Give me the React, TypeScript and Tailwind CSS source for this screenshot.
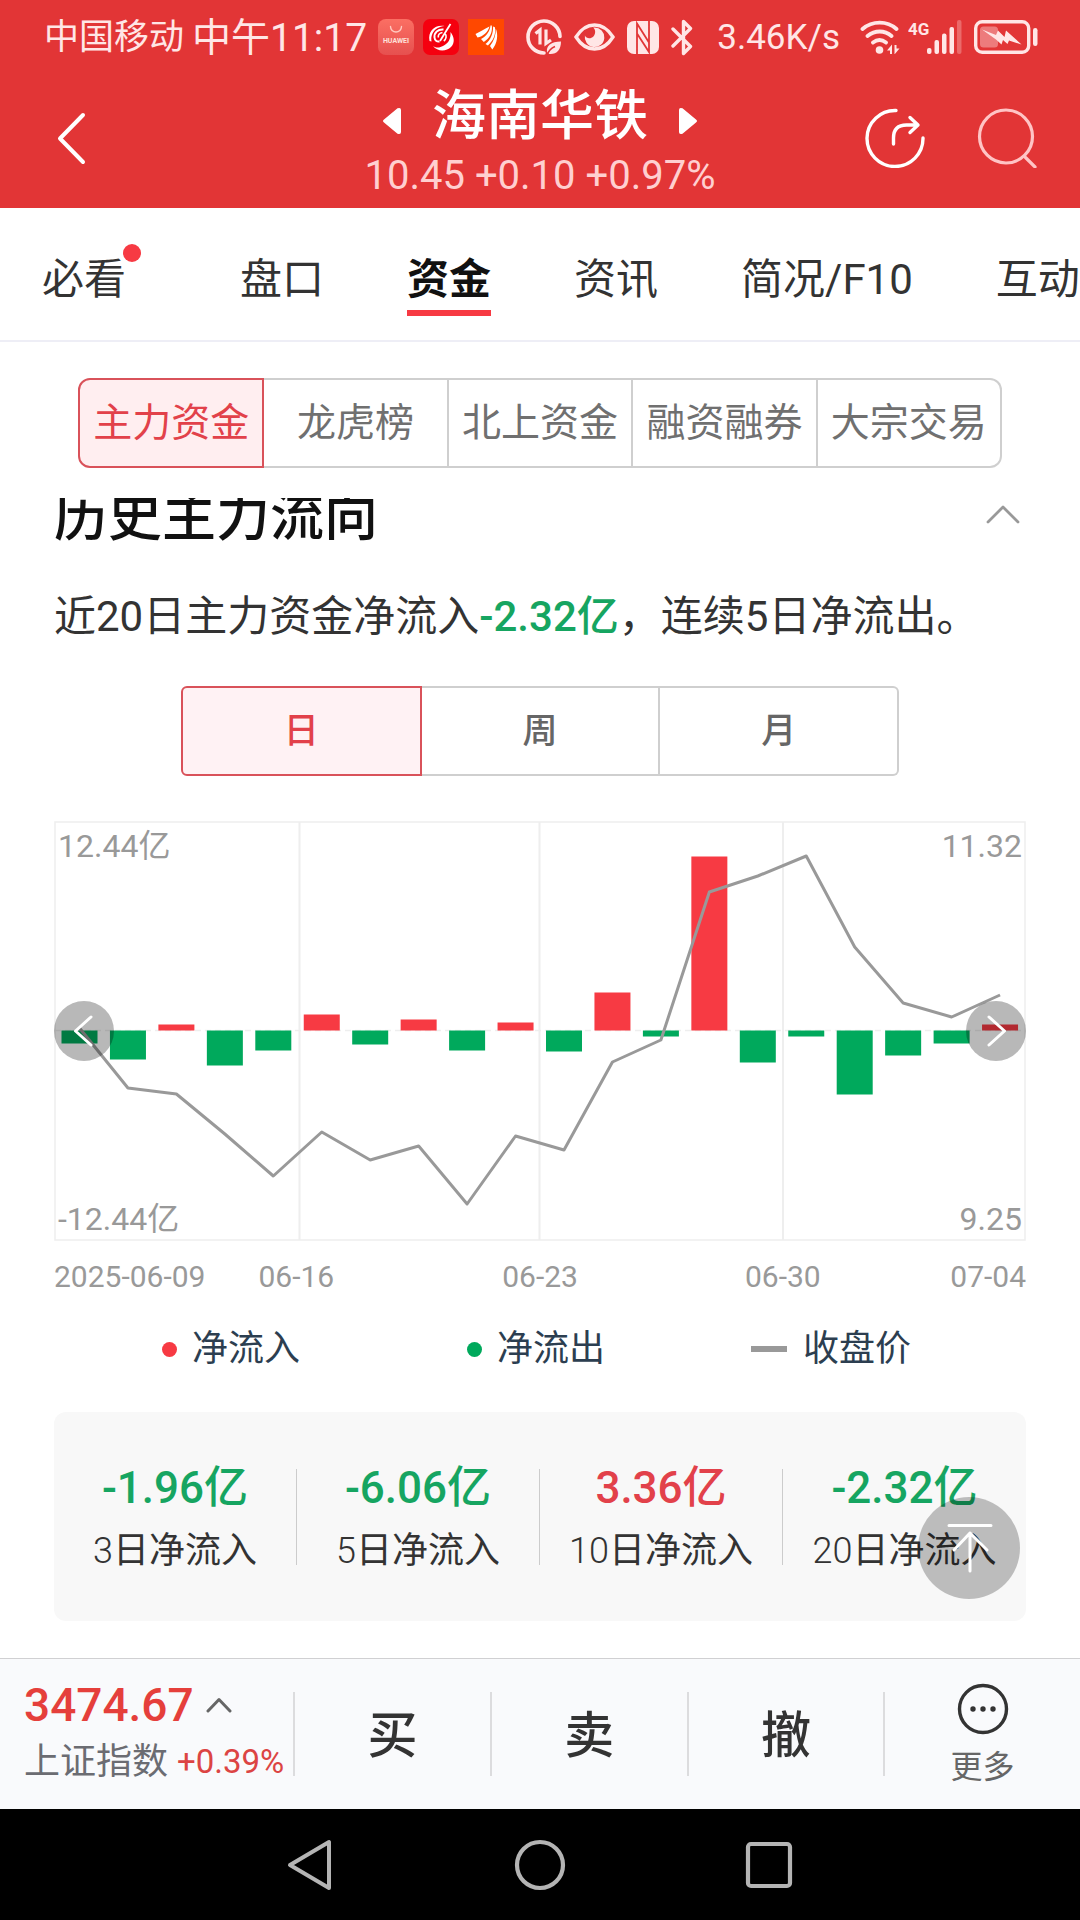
import React from 'react';

const TABS = ['盘口', '资金', '资讯', '简况/F10', '互动'];
const SECTIONS = ['主力资金', '龙虎榜', '北上资金', '融资融券', '大宗交易'];
const PERIODS = ['日', '周', '月'];

const FLOWS = [-13, -29, 6, -35, -20, 16, -14, 11, -20, 8, -21, 38, -6, 174, -32, -6, -64, -25, -13, 6];
const PRICES = [207, 267, 273, 313, 355, 311, 339, 325, 383, 315, 329, 241, 219, 71, 55, 35, 126, 182, 196, 174];

const SUMMARY = [
  { value: '-1.96亿', days: '3', up: false },
  { value: '-6.06亿', days: '5', up: false },
  { value: '3.36亿', days: '10', up: true },
  { value: '-2.32亿', days: '20', up: false },
];

function StatusBar() {
  return (
    <div className="flex h-[74px] items-center whitespace-nowrap pl-[44px] pr-[42px] text-[#ffe6e6]">
      <span className="pt-[2px] text-[35px] leading-[40px]">中国移动</span>
      <span className="ml-2 pt-[2px] text-[39px] leading-[40px]">中午11:17</span>
      <svg className="ml-auto h-9 w-9 shrink-0" viewBox="0 0 36 36" role="img" aria-label="应用市场">
        <defs>
          <linearGradient id="market" x1="0" y1="0" x2="0" y2="1">
            <stop offset="0" stopColor="#fb6f63" />
            <stop offset="1" stopColor="#e6504f" />
          </linearGradient>
        </defs>
        <rect width="36" height="36" rx="8" fill="url(#market)" />
        <path d="M12.500 7.500a5.500 5.500 0 0 0 11 0" fill="none" stroke="#ffc9c0" strokeWidth="1.400" strokeLinecap="round" />
        <text x="18" y="24" textAnchor="middle" fontFamily="Roboto, sans-serif" fontSize="7" fontWeight="700" fill="#ffe0da">HUAWEI</text>
      </svg>
      <svg className="ml-[9px] h-9 w-9 shrink-0" viewBox="0 0 36 36" aria-hidden="true">
        <rect width="36" height="36" rx="7" fill="#f5000f" />
        <path d="M6.500 22C4.500 12 12 5.500 21.500 7c-5 .5-10 3-12 7.500-1.200 2.500-1.500 5-1 8z" fill="#fff" />
        <path d="M10 27c4 2.500 7 1.500 10 0C25 24.500 28 20.500 27.500 13c4 5 4.500 11 .5 15-4.500 4.500-13.500 5-18-1z" fill="#fff" />
        <path d="M27.500 5 17 22" stroke="#fff" strokeWidth="1.800" fill="none" />
        <path d="M20.500 10.500c-5.500-.5-9.500 3-9 8 .3 3 2.300 4.500 5 4" stroke="#fff" strokeWidth="2" fill="none" />
        <path d="M19.500 13.500c-3 .5-4.500 2.500-4.200 5M22 15c1.800 1 1.500 5-1.200 7" stroke="#fff" strokeWidth="1.600" fill="none" />
      </svg>
      <svg className="ml-[9px] h-9 w-9 shrink-0" viewBox="0 0 36 36" aria-hidden="true">
        <rect width="36" height="36" fill="#ff4800" />
        <path d="M7.500 15C12 13 16 10 21.500 7.500 20 13 15 17.500 9.500 18.500z" fill="#fff" />
        <path d="M13 20C18 17.500 22 12.500 22.500 6.500h1.300c1 7.500-2.500 13-8 16.500z" fill="#fff" />
        <path d="M17.500 25c5-4 7.800-10 7.600-17.500l1.800.8c1.200 7-1.600 13.500-7 18.200z" fill="#fff" />
        <path d="M22 27c4-5 6-11 5.800-17.500 2.600 6.500 1.600 14.500-3.500 21z" fill="#fff" />
      </svg>
      <svg className="ml-[22px] h-9 w-9 shrink-0" viewBox="0 0 36 36" fill="none" stroke="currentColor" aria-hidden="true">
        <path d="M18 34A16 16 0 1 1 34 17.500" strokeWidth="3.600" strokeLinecap="round" />
        <path d="M9.500 14.500 14 11v14.500M20 10.500V24.500l5-3.500" strokeWidth="3.200" />
        <path d="M21 33c-1-6 4-10.500 14-10.500 0 8-4 12.500-10.500 12.500-1.500 0-2.500-.5-3.500-2z" fill="currentColor" stroke="none" />
        <path d="M21 36c1.500-4 4.500-7 8-8.500" stroke="#e23536" strokeWidth="1.600" />
      </svg>
      <svg className="ml-[12px] h-[28px] w-[41px] shrink-0" viewBox="0 0 41 28" aria-hidden="true">
        <path d="M2 14C7 6 13.500 2 20.500 2S34 6 39 14c-5 8-11.500 12-18.500 12S7 22 2 14z" fill="none" stroke="currentColor" strokeWidth="3.400" />
        <path d="M20.500 4.500a9.800 9.800 0 1 1-9.600 8c1.500 3.500 6 3.500 8.500 1 2.300-2.500 2.500-6.500-.2-8.900z" fill="currentColor" />
      </svg>
      <svg className="ml-[12px] h-[33px] w-8 shrink-0" viewBox="0 0 32 33" aria-hidden="true">
        <rect width="32" height="33" rx="7" fill="currentColor" />
        <path d="M10 33V2.500L22 21.500M22 0v31L10 12.500" fill="none" stroke="#e23536" strokeWidth="1.800" />
      </svg>
      <svg className="ml-[12px] h-[37px] w-[22px] shrink-0" viewBox="0 0 22 37" fill="none" stroke="currentColor" strokeWidth="3.400" strokeLinejoin="round" strokeLinecap="round" aria-hidden="true">
        <path d="M2 10l17.500 17.500-7 7V2.500l7 7L2 27" />
      </svg>
      <span className="ml-[24px] pt-[2px] text-[35px] leading-[40px]">3.46K/s</span>
      <svg className="ml-[20px] h-[34px] w-[40px] shrink-0" viewBox="0 0 40 34" fill="none" stroke="currentColor" strokeWidth="3.800" strokeLinecap="round" aria-hidden="true">
        <path d="M2.500 9c10-8.500 24.500-8.500 34 0M7.500 16c7.500-6 17-6 24 0M13 22.500c4.500-3.500 8.500-3.500 13 0" />
        <circle cx="19.500" cy="30" r="3.800" fill="currentColor" stroke="none" />
        <path d="M27 30.500l5-6v9.500h-2v-3.500zM39.500 28.500l-5 6v-9.500h2v3.500z" fill="currentColor" stroke="none" />
      </svg>
      <svg className="ml-[8px] h-[34px] w-[54px] shrink-0" viewBox="0 0 54 34" fill="currentColor" role="img" aria-label="4G">
        <text x="0" y="15" fontFamily="Roboto, sans-serif" fontSize="17" fontWeight="700">4G</text>
        <rect x="19" y="28" width="4.500" height="6" rx="2" />
        <rect x="26.500" y="20" width="4.500" height="14" rx="2" />
        <rect x="34" y="13.500" width="4.500" height="20.500" rx="2" />
        <rect x="41.500" y="7" width="4.500" height="27" rx="2" />
        <rect x="49" y="0" width="4.500" height="34" rx="2" opacity="0.300" />
      </svg>
      <svg className="ml-[12px] h-[34px] w-[64px] shrink-0" viewBox="0 0 64 34" aria-hidden="true">
        <rect x="1.700" y="1.700" width="53" height="30.600" rx="6.500" fill="none" stroke="currentColor" strokeWidth="3.400" />
        <rect x="6" y="6.500" width="18" height="21" rx="3.500" fill="currentColor" opacity="0.400" />
        <rect x="59" y="8" width="4.500" height="18" rx="2.200" fill="currentColor" />
        <path d="M8 9.500l14 5.500 2-4.500 6.500 6.500 1.500-6.500L47.500 24.500 35 20.500l-1.500 3.500-4.500-4-1.500 4.500-5.500-5z" fill="currentColor" />
      </svg>
    </div>
  );
}

function Header() {
  return (
    <header className="h-[208px] bg-[#e23536] text-white">
      <StatusBar />
      <div className="flex h-[128px] items-center justify-between pl-[52px] pr-[43px]">
        <button type="button" aria-label="返回" className="w-[163px]">
          <svg className="h-[60px] w-[40px]" viewBox="0 0 40 60" fill="none" stroke="currentColor" strokeWidth="4" strokeLinecap="round" strokeLinejoin="round">
            <path d="M31 7 8 30.500 31 54" />
          </svg>
        </button>
        <div className="flex flex-col items-center whitespace-nowrap pt-3">
          <div className="flex items-center gap-[31px]">
            <button type="button" aria-label="上一只" className="pt-2">
              <svg className="h-[28px] w-[18px]" viewBox="0 0 18 28" fill="currentColor"><path d="M1 12.500 14.500 1.300Q18 0 18 3v22q0 3-3.500 1.700L1 15.500q-2-1.500 0-3z" /></svg>
            </button>
            <h1 className="text-[54px] font-medium leading-[64px]">海南华铁</h1>
            <button type="button" aria-label="下一只" className="pt-2">
              <svg className="h-[28px] w-[18px]" viewBox="0 0 18 28" fill="currentColor"><path d="M17 12.500 3.500 1.300Q0 0 0 3v22q0 3 3.500 1.700L17 15.500q2-1.500 0-3z" /></svg>
            </button>
          </div>
          <p className="text-[40px] leading-[54px] text-[#ffcfd0]">10.45 +0.10 +0.97%</p>
        </div>
        <div className="flex items-center gap-[52px]">
          <button type="button" aria-label="分享">
            <svg className="h-[60px] w-[60px]" viewBox="0 0 60 60" fill="none" stroke="currentColor" strokeWidth="3.400" strokeLinecap="round" strokeLinejoin="round">
              <path d="M31 2.500A28 28 0 1 0 58 30" />
              <path d="M28.500 36V30q0-13 13-13H52M45 9.500l8 7.500-8 7.500" />
            </svg>
          </button>
          <button type="button" aria-label="搜索">
            <svg className="h-[60px] w-[60px]" viewBox="0 0 60 60" fill="none" stroke="#ffc4c5" strokeWidth="3.200" strokeLinecap="round">
              <circle cx="29" cy="28.500" r="26.500" />
              <path d="M48.500 49.500 58 59" />
            </svg>
          </button>
        </div>
      </div>
    </header>
  );
}

function Tabs() {
  return (
    <nav className="flex h-[134px] gap-[83px] overflow-hidden whitespace-nowrap border-b-2 border-[#eeeef6] pl-[42px] text-[42px] leading-[60px] text-[#333]">
      <button type="button" className="relative mr-[31px] mt-[42px] h-[60px] shrink-0">
        必看
        <span className="absolute -right-[15px] -top-[6px] h-[18px] w-[18px] rounded-full bg-[#f73a43]" />
      </button>
      {TABS.map((tab) =>
        tab === '资金' ? (
          <button key={tab} type="button" className="mt-[42px] h-[66px] shrink-0 border-b-[6px] border-[#f73a43] font-bold text-[#111]">
            {tab}
          </button>
        ) : (
          <button key={tab} type="button" className="mt-[42px] h-[60px] shrink-0">
            {tab}
          </button>
        ),
      )}
    </nav>
  );
}

function FlowChart() {
  const x = (i: number) => 25.5 + i * 48.45;
  const line = PRICES.map((p, i) => `${x(i)},${p}`).join(' ');
  return (
    <div className="relative mt-[45px] text-[32px] leading-[36px] text-[#999]">
      <svg className="block h-auto w-full" viewBox="0 0 972 420" role="img" aria-label="主力资金流向图">
        <g fill="none" stroke="#eeeeee" strokeWidth="1.500">
          <rect x="1" y="1" width="970" height="418" />
          <path d="M245.500 1v418M485.500 1v418M729 1v418" strokeWidth="2" />
          <path d="M1 209.500h970" strokeDasharray="6 4" />
        </g>
        {FLOWS.map((v, i) => (
          <rect key={i} x={x(i) - 18} y={v > 0 ? 209.5 - v : 209.5} width={36} height={Math.abs(v)} fill={v > 0 ? '#f73a43' : '#00a95c'} />
        ))}
        <polyline points={line} fill="none" stroke="#999" strokeWidth="3" strokeLinejoin="round" />
      </svg>
      <span className="absolute left-[4px] top-[7px]">12.44亿</span>
      <span className="absolute right-[4px] top-[7px]">11.32</span>
      <span className="absolute bottom-[4px] left-[4px]">-12.44亿</span>
      <span className="absolute bottom-[4px] right-[4px]">9.25</span>
      <button type="button" aria-label="向前" className="absolute left-0 top-1/2 -mt-[30px] h-[60px] w-[60px] rounded-full bg-black/28">
        <svg viewBox="0 0 60 60" fill="none" stroke="#fff" strokeWidth="3" strokeLinecap="round" strokeLinejoin="round"><path d="M37 16 21.500 30 37 44" /></svg>
      </button>
      <button type="button" aria-label="向后" className="absolute right-0 top-1/2 -mt-[30px] h-[60px] w-[60px] rounded-full bg-black/28">
        <svg viewBox="0 0 60 60" fill="none" stroke="#fff" strokeWidth="3" strokeLinecap="round" strokeLinejoin="round"><path d="M23 16 38.500 30 23 44" /></svg>
      </button>
    </div>
  );
}

function BottomBar() {
  return (
    <footer className="flex h-[151px] items-center border-t border-[#d0d0d2] bg-[#f9fafc] text-[#333]">
      <button type="button" className="w-[293px] shrink-0 whitespace-nowrap pl-6 text-left">
        <span className="flex items-center gap-[12px] text-[46px] font-medium leading-[56px] text-[#e53f3b]">
          3474.67
          <svg className="h-[16px] w-[26px]" viewBox="0 0 26 16" fill="none" stroke="#666" strokeWidth="3" strokeLinecap="round" strokeLinejoin="round"><path d="M2 14 13 2.500 24 14" /></svg>
        </span>
        <span className="flex items-center gap-[9px] text-[36px] leading-[58px] text-[#6b6c72]">
          上证指数
          <span className="text-[33px] text-[#dc4443]">+0.39%</span>
        </span>
      </button>
      {['买', '卖', '撤'].map((label) => (
        <button key={label} type="button" className="h-[84px] flex-1 border-l-2 border-[#dcdcde] pt-1 text-[50px] font-medium leading-[80px]">
          {label}
        </button>
      ))}
      <div className="h-[84px] w-[2px] bg-[#dcdcde]" />
      <button type="button" className="flex flex-1 flex-col items-center pt-1 text-[32px] leading-[44px] text-[#666]">
        <svg className="mb-[10px] h-[52px] w-[52px]" viewBox="0 0 52 52" aria-hidden="true">
          <circle cx="26" cy="26" r="23.500" fill="none" stroke="#333" strokeWidth="3.400" />
          <g fill="#333"><circle cx="16" cy="26" r="2.700" /><circle cx="26" cy="26" r="2.700" /><circle cx="36" cy="26" r="2.700" /></g>
        </svg>
        更多
      </button>
    </footer>
  );
}

function SystemNav() {
  return (
    <div className="flex h-[111px] items-center justify-center gap-[175px] bg-black">
      <button type="button" aria-label="后退">
        <svg className="h-[54px] w-[54px]" viewBox="0 0 54 54" fill="none" stroke="#b4b4b4" strokeWidth="4" strokeLinejoin="round"><path d="M45 4v46L6 27z" /></svg>
      </button>
      <button type="button" aria-label="主屏幕">
        <svg className="h-[54px] w-[54px]" viewBox="0 0 54 54" fill="none" stroke="#b4b4b4" strokeWidth="4.200"><circle cx="27" cy="27" r="23" /></svg>
      </button>
      <button type="button" aria-label="最近任务">
        <svg className="h-[54px] w-[54px]" viewBox="0 0 54 54" fill="none" stroke="#b4b4b4" strokeWidth="4.200"><rect x="6" y="6" width="42" height="42" rx="3" /></svg>
      </button>
    </div>
  );
}

export default function App() {
  return (
    <div className="flex min-h-screen flex-col overflow-hidden bg-white font-['Roboto','Noto_Sans_CJK_SC',sans-serif]">
      <Header />
      <Tabs />
      <div className="mx-[78px] mt-[36px] flex h-[90px] shrink-0 text-[39px] text-[#707070]">
        {SECTIONS.map((s, i) => (
          <button
            key={s}
            type="button"
            className={
              i === 0
                ? 'flex-1 whitespace-nowrap rounded-l-[12px] border-2 border-[#d9525a] bg-[#ffeef0] text-[#e2414a]'
                : 'flex-1 whitespace-nowrap border-y-2 border-r-2 border-[#cfcfcf] last:rounded-r-[12px]'
            }
          >
            {s}
          </button>
        ))}
      </div>

      <main className="mt-[30px] flex-1 overflow-hidden px-[54px]">
        <div className="-mt-[13px] flex h-[66px] justify-between pr-[6px]">
          <h2 className="text-[54px] font-medium leading-[66px] text-[#111]">历史主力流向</h2>
          <button type="button" aria-label="收起" className="pb-2">
            <svg className="h-[20px] w-[34px]" viewBox="0 0 34 20" fill="none" stroke="#999" strokeWidth="2.800" strokeLinecap="round" strokeLinejoin="round"><path d="M2 18 17 3l15 15" /></svg>
          </button>
        </div>
        <p className="mt-[36px] whitespace-nowrap text-[42px] leading-[60px] text-[#333]">
          近20日主力资金净流入<span className="font-medium text-[#16a561]">-2.32亿</span>，连续5日净流出。
        </p>
        <div className="mx-auto mt-[39px] flex h-[90px] w-[718px] max-w-full text-[35px] font-medium text-[#666]">
          {PERIODS.map((p, i) => (
            <button
              key={p}
              type="button"
              className={
                i === 0
                  ? 'flex-1 rounded-l-[6px] border-2 border-[#d9525a] bg-[#fff2f4] pt-[3px] text-[#e2414a]'
                  : 'flex-1 border-y-2 border-r-2 border-[#cfcfcf] pt-[3px] last:rounded-r-[6px]'
              }
            >
              {p}
            </button>
          ))}
        </div>
        <FlowChart />
        <div className="mt-[20px] flex whitespace-nowrap text-[30px] leading-[32px] text-[#999]">
          <span>2025-06-09</span>
          <span className="ml-[53px]">06-16</span>
          <span className="ml-[168px]">06-23</span>
          <span className="ml-[167px]">06-30</span>
          <span className="ml-auto">07-04</span>
        </div>
        <div className="mt-[31px] flex items-center whitespace-nowrap pl-[108px] text-[36px] leading-[50px] text-[#2c3e50]">
          <span className="h-[15px] w-[15px] rounded-full bg-[#f73a43]" />
          <span className="ml-[15px]">净流入</span>
          <span className="ml-[167px] h-[15px] w-[15px] rounded-full bg-[#00a95c]" />
          <span className="ml-[15px]">净流出</span>
          <span className="ml-[146px] h-[6px] w-[36px] bg-[#999]" />
          <span className="ml-[16px]">收盘价</span>
        </div>
        <div className="relative mt-[38px]">
          <section className="grid h-[209px] grid-cols-4 items-center rounded-[12px] bg-[#f8f8f8]">
            {SUMMARY.map((s) => (
              <div key={s.days} className="flex h-[96px] flex-col items-center justify-center whitespace-nowrap border-r border-[#ccc] pt-[6px] last:border-r-0">
                <span className={s.up ? 'text-[44px] font-medium leading-[62px] text-[#e2414a]' : 'text-[44px] font-medium leading-[62px] text-[#16a561]'}>{s.value}</span>
                <span className="text-[36px] leading-[64px] text-[#333]">
                  <span className="font-light">{s.days}</span>日净流入
                </span>
              </div>
            ))}
          </section>
          <button type="button" aria-label="回到顶部" className="absolute right-[6px] top-[85px] h-[102px] w-[102px] rounded-full bg-black/24">
            <svg viewBox="0 0 102 102" fill="none" stroke="#fff" strokeWidth="3" strokeLinecap="round" strokeLinejoin="round"><path d="M31 28.500h42M52 74V36M36 53l16-17 17 17" /></svg>
          </button>
        </div>
      </main>
      <BottomBar />
      <SystemNav />
    </div>
  );
}
